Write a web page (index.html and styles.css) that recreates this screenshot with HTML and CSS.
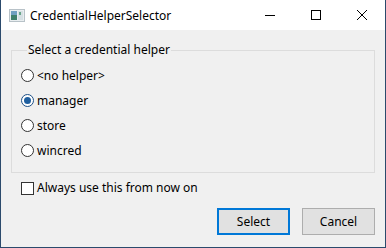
FILE: index.html
```html
<!DOCTYPE html>
<html>
<head>
<meta charset="utf-8">
<link rel="stylesheet" href="styles.css">
</head>
<body>
<div class="window">
  <div class="titlebar">
    <div class="app-icon">
      <svg width="16" height="13" viewBox="0 0 16 13">
        <rect x="0.5" y="0.5" width="15" height="12" fill="#e9eef0" stroke="#b8c2c8"/>
        <rect x="2" y="2" width="6" height="9" fill="#3f7f6a"/>
        <rect x="2" y="2" width="6" height="4" fill="#6f9fc0"/>
        <rect x="9" y="2" width="5" height="9" fill="#d6e0e4"/>
        <rect x="10" y="3" width="2" height="3" fill="#6aa58a"/>
      </svg>
    </div>
    <div class="title">CredentialHelperSelector</div>
    <div class="controls">
      <div class="ctl">
        <svg width="10" height="10" viewBox="0 0 10 10"><path d="M0 5.5H10" stroke="#000" stroke-width="1"/></svg>
      </div>
      <div class="ctl">
        <svg width="10" height="10" viewBox="0 0 10 10"><rect x="0.5" y="0.5" width="9" height="9" fill="none" stroke="#000"/></svg>
      </div>
      <div class="ctl">
        <svg width="10" height="10" viewBox="0 0 10 10"><path d="M0 0L10 10M10 0L0 10" stroke="#000" stroke-width="1"/></svg>
      </div>
    </div>
  </div>
  <div class="client">
    <fieldset class="group">
      <legend class="group-label">Select a credential helper</legend>
      <div class="option"><span class="radio"></span><span class="opt-text">&lt;no helper&gt;</span></div>
      <div class="option"><span class="radio checked"></span><span class="opt-text">manager</span></div>
      <div class="option"><span class="radio"></span><span class="opt-text">store</span></div>
      <div class="option"><span class="radio"></span><span class="opt-text">wincred</span></div>
    </fieldset>
    <div class="check-row"><span class="checkbox"></span><span class="opt-text">Always use this from now on</span></div>
    <div class="buttons">
      <button class="btn default">Select</button>
      <button class="btn">Cancel</button>
    </div>
  </div>
</div>
</body>
</html>
```
FILE: styles.css
```css
html, body {
  margin: 0;
  padding: 0;
  background: #f0f0f0;
}
body {
  font-family: "Segoe UI", "Noto Sans", "Open Sans", sans-serif;
  font-size: 12px;
  color: #000;
}
.window {
  width: 386px;
  height: 248px;
  box-sizing: border-box;
  border: 1px solid #2b4a6c;
  border-top: none;
  display: flex;
  flex-direction: column;
  background: #f0f0f0;
}
.titlebar {
  height: 30px;
  background: #fff;
  display: flex;
  align-items: center;
  flex: none;
}
.app-icon {
  width: 16px;
  height: 13px;
  margin-left: 8px;
  margin-right: 5px;
  display: flex;
}
.title {
  flex: 1;
  font-size: 12px;
  line-height: 16px;
  padding-top: 1px;
}
.controls {
  display: flex;
  height: 30px;
}
.ctl {
  width: 46px;
  height: 30px;
  display: flex;
  align-items: center;
  justify-content: center;
}
.client {
  flex: 1;
  display: flex;
  flex-direction: column;
  padding: 0 10px 0 10px;
}
.group {
  margin: 12px 0 0 0;
  padding: 5px 8px 9px 9px;
  border: 1px solid #dcdcdc;
  min-width: 0;
}
.group-label {
  padding: 0 1px;
  margin-left: 6px;
  line-height: 16px;
}
.option {
  height: 25px;
  display: flex;
  align-items: center;
}
.radio {
  width: 13px;
  height: 13px;
  box-sizing: border-box;
  border: 1px solid #333;
  border-radius: 50%;
  background: #fff;
  margin-right: 3px;
  display: flex;
  align-items: center;
  justify-content: center;
  flex: none;
}
.radio.checked {
  border-color: #1c4f86;
}
.radio.checked::after {
  content: "";
  width: 7px;
  height: 7px;
  border-radius: 50%;
  background: #1f5f9f;
}
.opt-text {
  line-height: 16px;
}
.check-row {
  display: flex;
  align-items: center;
  height: 20px;
  margin-top: 5px;
  padding-left: 10px;
}
.checkbox {
  width: 13px;
  height: 13px;
  box-sizing: border-box;
  border: 1px solid #333;
  background: #fff;
  margin-right: 3px;
  flex: none;
}
.buttons {
  display: flex;
  justify-content: flex-end;
  gap: 12px;
  margin-top: 10px;
}
.btn {
  width: 73px;
  height: 27px;
  box-sizing: border-box;
  border: 1px solid #adadad;
  background: #e1e1e1;
  font-family: inherit;
  font-size: 12px;
  color: #000;
  padding: 0;
}
.btn.default {
  border: 2px solid #0078d7;
}
```
